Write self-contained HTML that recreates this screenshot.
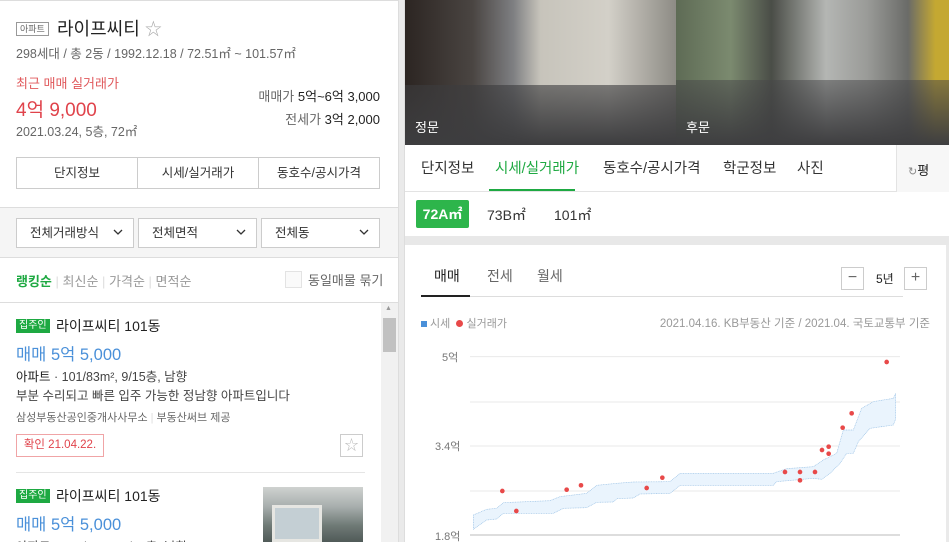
<!DOCTYPE html>
<html><head><meta charset="utf-8">
<style>
*{margin:0;padding:0;box-sizing:border-box}
html,body{width:949px;height:542px;overflow:hidden}
body{background:#fff;font-family:"Liberation Sans","Noto Sans CJK KR",sans-serif;color:#333;position:relative}
.a{position:absolute;white-space:nowrap}
.box{position:absolute;border:1px solid #ccc;background:#fff}
.chev{position:absolute;right:10px;top:10px}
</style></head><body>
<div class="a" style="left:0;top:0;width:398px;height:542px;border-top:1px solid #ddd;"></div>
<div class="a" style="left:16px;top:22px;border:1px solid #999;font-size:9px;color:#666;padding:0 3px;line-height:12px">아파트</div>
<div class="a" style="left:57px;top:15px;font-size:18px;color:#222">라이프씨티 <span style="color:#aaa;font-size:17px">☆</span></div>
<div class="a" style="left:16px;top:43px;font-size:12.5px;color:#666">298세대 / 총 2동 / 1992.12.18 / 72.51㎡ ~ 101.57㎡</div>
<div class="a" style="left:16px;top:73px;font-size:13px;color:#e0595c">최근 매매 실거래가</div>
<div class="a" style="left:16px;top:95px;font-size:19px;color:#e0434b">4억 9,000</div>
<div class="a" style="left:16px;top:121px;font-size:12.5px;color:#666">2021.03.24, 5층, 72㎡</div>
<div class="a" style="right:569px;top:86px;font-size:13px;color:#666">매매가 <span style="color:#222">5억~6억 3,000</span></div>
<div class="a" style="right:569px;top:109px;font-size:13px;color:#666">전세가 <span style="color:#222">3억 2,000</span></div>
<div class="box" style="left:16px;top:157px;width:364px;height:32px;display:flex;font-size:12.5px;color:#333">
<div style="flex:1;text-align:center;line-height:30px;border-right:1px solid #ccc">단지정보</div>
<div style="flex:1;text-align:center;line-height:30px;border-right:1px solid #ccc">시세/실거래가</div>
<div style="flex:1;text-align:center;line-height:30px">동호수/공시가격</div></div>
<div class="a" style="left:0;top:207px;width:398px;height:51px;background:#f5f5f5;border-top:1px solid #ddd;border-bottom:1px solid #ddd"></div>
<div class="box" style="left:16px;top:218px;width:118px;height:30px;font-size:12.5px;line-height:28px;padding-left:13px">전체거래방식<svg class="chev" width="10" height="7"><path d="M1 1L5 5L9 1" stroke="#333" stroke-width="1.3" fill="none"/></svg></div>
<div class="box" style="left:138px;top:218px;width:119px;height:30px;font-size:12.5px;line-height:28px;padding-left:13px">전체면적<svg class="chev" width="10" height="7"><path d="M1 1L5 5L9 1" stroke="#333" stroke-width="1.3" fill="none"/></svg></div>
<div class="box" style="left:261px;top:218px;width:119px;height:30px;font-size:12.5px;line-height:28px;padding-left:13px">전체동<svg class="chev" width="10" height="7"><path d="M1 1L5 5L9 1" stroke="#333" stroke-width="1.3" fill="none"/></svg></div>
<div class="a" style="left:16px;top:271px;font-size:13px;color:#999"><b style="color:#1ea942">랭킹순</b> <span style="color:#ddd">|</span> 최신순 <span style="color:#ddd">|</span> 가격순 <span style="color:#ddd">|</span> 면적순</div>
<div class="a" style="left:285px;top:271px;width:17px;height:17px;border:1px solid #e3e3e3;background:#fafafa"></div>
<div class="a" style="left:308px;top:270px;font-size:13px;color:#666">동일매물 묶기</div>
<div class="a" style="left:0;top:302px;width:398px;border-top:1px solid #ddd"></div>
<div class="a" style="left:381px;top:303px;width:17px;height:239px;background:#f1f1f1"></div>
<div class="a" style="left:385px;top:305px;font-size:7px;color:#999">▲</div>
<div class="a" style="left:383px;top:318px;width:13px;height:34px;background:#c1c1c1"></div>
<div class="a" style="left:16px;top:319px;background:#1ea942;color:#fff;font-size:10px;padding:0 3px;line-height:14px">집주인</div>
<div class="a" style="left:56px;top:316px;font-size:14px;color:#222">라이프씨티 101동</div>
<div class="a" style="left:16px;top:341px;font-size:16.5px;color:#4a90d9">매매 5억 5,000</div>
<div class="a" style="left:16px;top:366px;font-size:12.5px;color:#444"><span style="color:#222">아파트</span> · 101/83m², 9/15층, 남향</div>
<div class="a" style="left:16px;top:385px;font-size:12.5px;color:#444">부분 수리되고 빠른 입주 가능한 정남향 아파트입니다</div>
<div class="a" style="left:16px;top:409px;font-size:11px;color:#666">삼성부동산공인중개사사무소 <span style="color:#ddd">|</span> 부동산써브 제공</div>
<div class="a" style="left:16px;top:434px;width:88px;height:23px;border:1px solid #f0a4a6;color:#e0434b;font-size:11.5px;line-height:21px;text-align:center">확인 21.04.22.</div>
<div class="a" style="left:340px;top:434px;width:23px;height:23px;border:1px solid #ccc;color:#bbb;font-size:14px;line-height:21px;text-align:center">☆</div>
<div class="a" style="left:16px;top:472px;width:349px;border-top:1px solid #e5e5e5"></div>
<div class="a" style="left:16px;top:489px;background:#1ea942;color:#fff;font-size:10px;padding:0 3px;line-height:14px">집주인</div>
<div class="a" style="left:56px;top:486px;font-size:14px;color:#222">라이프씨티 101동</div>
<div class="a" style="left:16px;top:511px;font-size:16.5px;color:#4a90d9">매매 5억 5,000</div>
<div class="a" style="left:16px;top:536px;font-size:12.5px;color:#444">아파트 · 101/83m², 9/15층, 남향</div>
<div class="a" style="left:263px;top:487px;width:100px;height:55px;background:linear-gradient(180deg,#cfd2d0 0%,#a9afae 35%,#6f7a76 70%,#505a58 100%)"></div>
<div class="a" style="left:272px;top:505px;width:50px;height:37px;border:3px solid #e6e6e2;background:#c4cfd4"></div>
<div class="a" style="left:398px;top:0;width:7px;height:542px;background:#eaeaea;border-left:1px solid #ddd;border-right:1px solid #ddd"></div>
<div class="a" style="left:405px;top:0;width:271px;height:145px;background:linear-gradient(90deg,#2c2522 0%,#4a4542 25%,#7e7f82 40%,#c7c4bb 50%,#d3d0c8 75%,#8d8b85 100%)"></div>
<div class="a" style="left:405px;top:85px;width:271px;height:60px;background:linear-gradient(180deg,rgba(60,60,62,.6),#3d3d3f)"></div>
<div class="a" style="left:676px;top:0;width:273px;height:145px;background:linear-gradient(90deg,#5e6b55 0%,#7b8a6f 20%,#4a4d47 35%,#b4b6b3 55%,#9a9b98 70%,#6a6b68 85%,#c4a832 95%)"></div>
<div class="a" style="left:676px;top:80px;width:273px;height:65px;background:linear-gradient(180deg,rgba(70,70,72,.5),#3e3e40)"></div>
<div class="a" style="left:415px;top:117px;font-size:13px;color:#fff">정문</div>
<div class="a" style="left:686px;top:117px;font-size:13px;color:#fff">후문</div>
<div class="a" style="left:405px;top:145px;width:544px;height:47px;border-bottom:1px solid #e3e3e3"></div>
<div class="a" style="left:421px;top:157px;font-size:14.5px;color:#333">단지정보</div>
<div class="a" style="left:495px;top:157px;font-size:14.5px;color:#1ea942">시세/실거래가</div>
<div class="a" style="left:489px;top:189px;width:86px;height:2px;background:#1ea942"></div>
<div class="a" style="left:603px;top:157px;font-size:14.5px;color:#333">동호수/공시가격</div>
<div class="a" style="left:723px;top:157px;font-size:14.5px;color:#333">학군정보</div>
<div class="a" style="left:797px;top:157px;font-size:14.5px;color:#333">사진</div>
<div class="a" style="left:896px;top:145px;width:53px;height:47px;background:#f7f7f7;border-left:1px solid #e3e3e3"></div>
<div class="a" style="left:908px;top:160px;font-size:13px;color:#222"><span style="color:#888;font-size:11px">↻</span>평</div>
<div class="a" style="left:416px;top:200px;width:53px;height:28px;background:#2db54b;border-radius:2px;color:#fff;font-size:14px;font-weight:bold;line-height:28px;text-align:center">72A㎡</div>
<div class="a" style="left:487px;top:205px;font-size:14px;color:#333">73B㎡</div>
<div class="a" style="left:554px;top:205px;font-size:14px;color:#333">101㎡</div>
<div class="a" style="left:405px;top:236px;width:544px;height:9px;background:#e8e8e8"></div>
<div class="a" style="left:434px;top:266px;font-size:14px;color:#222">매매</div>
<div class="a" style="left:421px;top:295px;width:49px;height:2px;background:#222"></div>
<div class="a" style="left:470px;top:296px;width:433px;border-top:1px solid #ddd"></div>
<div class="a" style="left:487px;top:266px;font-size:14px;color:#666">전세</div>
<div class="a" style="left:537px;top:266px;font-size:14px;color:#666">월세</div>
<div class="a" style="left:841px;top:267px;width:23px;height:23px;border:1px solid #ccc;text-align:center;line-height:20px;color:#666">−</div>
<div class="a" style="left:876px;top:270px;font-size:12px;color:#222">5년</div>
<div class="a" style="left:904px;top:267px;width:23px;height:23px;border:1px solid #ccc;text-align:center;line-height:20px;color:#666">+</div>
<div class="a" style="left:421px;top:315px;font-size:11px;color:#999"><span style="display:inline-block;width:6px;height:6px;background:#4a90d9"></span> 시세 &nbsp;<span style="display:inline-block;width:7px;height:7px;border-radius:50%;background:#e84949"></span> 실거래가</div>
<div class="a" style="right:19px;top:315px;font-size:11.5px;color:#999">2021.04.16. KB부동산 기준 / 2021.04. 국토교통부 기준</div>
<div class="a" style="left:442px;top:349px;font-size:11px;color:#777">5억</div>
<div class="a" style="left:435px;top:438px;font-size:11px;color:#777">3.4억</div>
<div class="a" style="left:435px;top:528px;font-size:11px;color:#777">1.8억</div>
<svg class="a" style="left:400px;top:340px" width="549" height="202" viewBox="0 0 1647 606">
<g stroke="#eaeaea" stroke-width="3"><line x1="210" y1="50" x2="1500" y2="50"/><line x1="210" y1="186" x2="1500" y2="186"/><line x1="210" y1="318" x2="1500" y2="318"/><line x1="210" y1="453" x2="1500" y2="453"/></g>
<line x1="210" y1="585" x2="1500" y2="585" stroke="#bbb" stroke-width="3"/>
<polygon fill="#eaf4fd" stroke="#9cc3e6" stroke-width="2" stroke-dasharray="3,2" points="220,525 260,508 290,505 310,488 450,482 480,470 560,460 590,436 650,430 700,426 810,425 840,400 1120,400 1160,386 1240,380 1270,360 1310,340 1330,270 1360,270 1385,205 1420,185 1480,175 1487,160 1487,237 1480,255 1410,265 1375,305 1360,340 1340,340 1320,370 1290,400 1265,418 1240,415 1130,425 1120,436 840,436 810,460 720,462 700,474 650,476 640,486 590,487 560,503 490,505 460,520 310,520 290,537 260,540 220,568"/>
<g fill="#e84949"><circle cx="307" cy="453" r="7"/><circle cx="349" cy="513" r="7"/><circle cx="500" cy="449" r="7"/><circle cx="543" cy="436" r="7"/><circle cx="740" cy="444" r="7"/><circle cx="787" cy="413" r="7"/><circle cx="1155" cy="396" r="7"/><circle cx="1200" cy="396" r="7"/><circle cx="1200" cy="421" r="7"/><circle cx="1245" cy="396" r="7"/><circle cx="1266" cy="330" r="7"/><circle cx="1286" cy="320" r="7"/><circle cx="1286" cy="341" r="7"/><circle cx="1328" cy="263" r="7"/><circle cx="1355" cy="220" r="7"/><circle cx="1460" cy="66" r="7"/></g>
</svg>
<div class="a" style="left:946px;top:245px;width:3px;height:297px;background:#eaeaea"></div>
</body></html>
